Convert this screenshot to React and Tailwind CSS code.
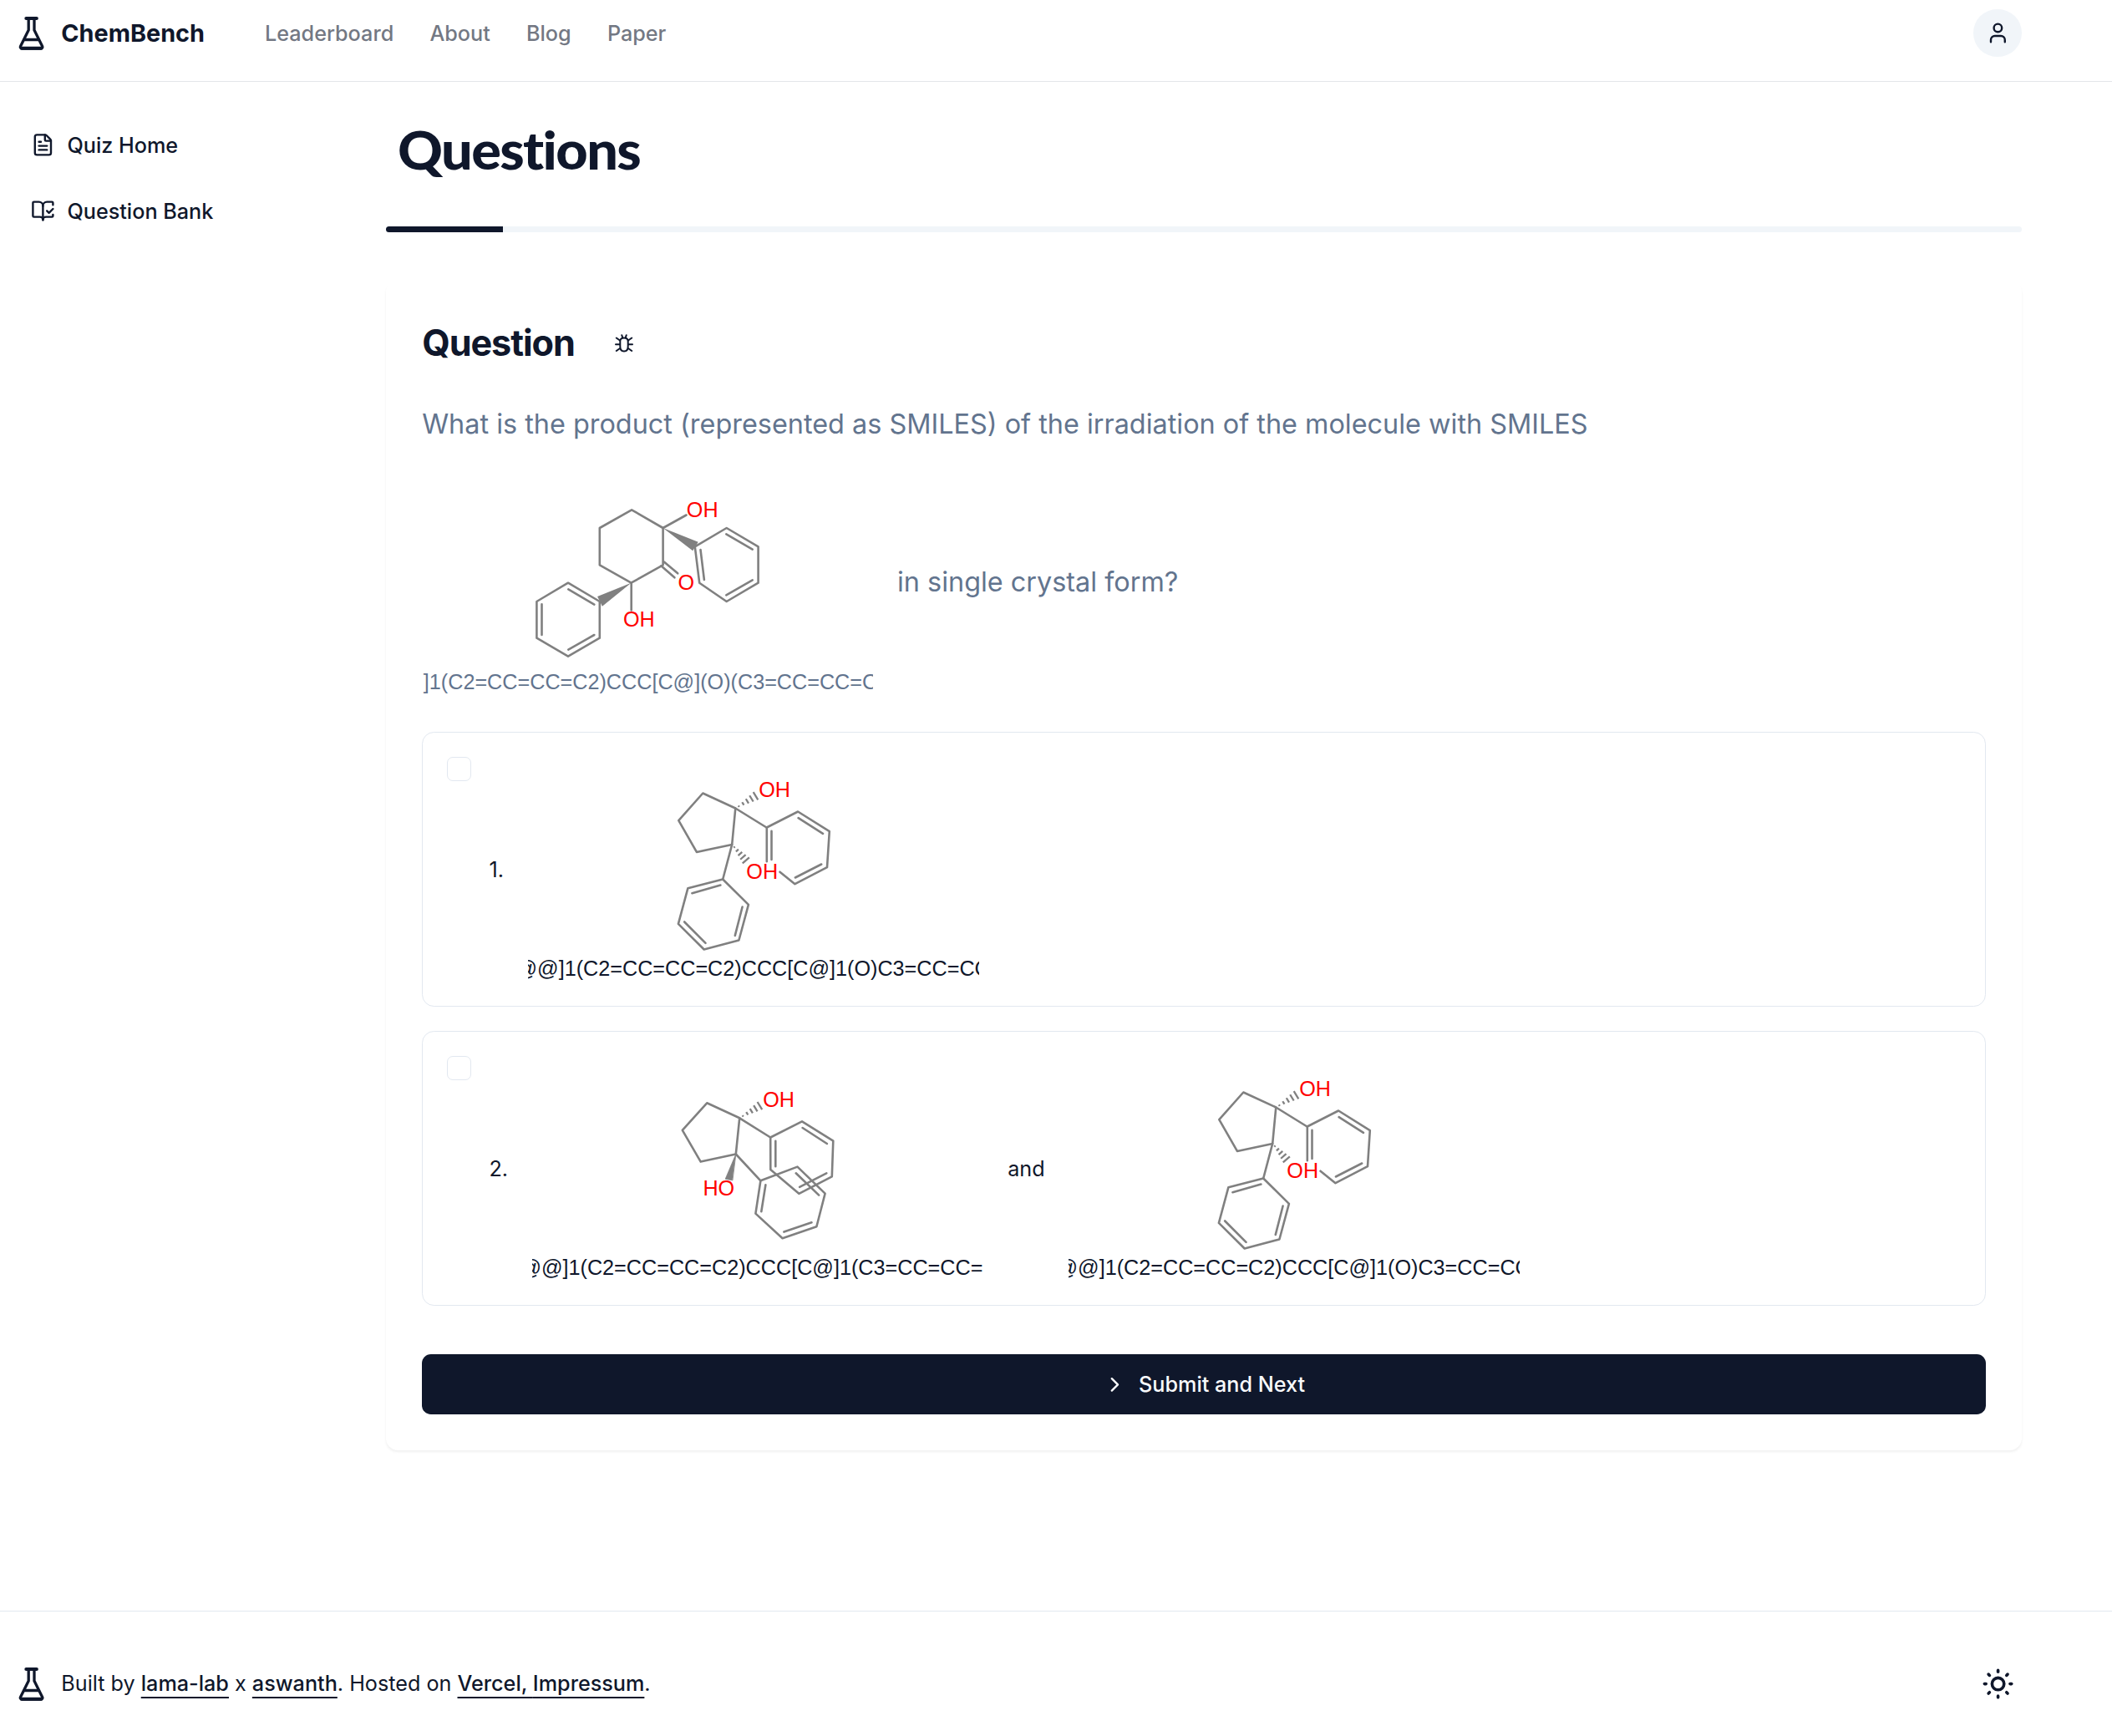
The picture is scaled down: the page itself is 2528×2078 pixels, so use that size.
import React from "react";
import { FileText, BookOpenCheck, User, ChevronRight, SunMedium } from "lucide-react";

const NAV = ["Leaderboard", "About", "Blog", "Paper"];

function Flask() {
  return (
    <svg width="32" height="42" viewBox="0 0 32 42" fill="none" stroke="currentColor" strokeLinecap="round" strokeLinejoin="round" className="shrink-0">
      <path d="M9.300 3h12.600" strokeWidth="4" />
      <path d="M12.200 3v14L2.500 36.500a1.800 1.800 0 0 0 1.600 2.600h23a1.800 1.800 0 0 0 1.600-2.600L19 17V3" strokeWidth="3.300" />
      <path d="M7.500 28.500h16.200" strokeWidth="3.400" />
      <path d="M3.800 38.800h23.600" strokeWidth="4" />
    </svg>
  );
}

function BugIcon() {
  return (
    <svg width="22" height="22" viewBox="0 0 22 22" fill="none" stroke="currentColor" strokeWidth="2" strokeLinecap="round" strokeLinejoin="round">
      <path d="M11 4.400c3.200 0 4.700 1.400 4.700 4v6.200c0 3.600-1.600 6-4.700 6s-4.700-2.400-4.700-6V8.400c0-2.600 1.500-4 4.700-4z" />
      <path d="M8.300 1.200l.8 2.600M13.700 1.200l-.8 2.600M1 12.300h5M16 12.300h5M1.800 4.500l4.200 3M20.200 4.500l-4.200 3M1.800 20l4.200-3M20.200 20l-4.200-3" />
    </svg>
  );
}

function Hash({ x1, y1, x2, y2, steps = [0.16, 0.36, 0.56, 0.76, 0.96], spread = 5.6 }) {
  const len = Math.hypot(x2 - x1, y2 - y1);
  const nx = -(y2 - y1) / len;
  const ny = (x2 - x1) / len;
  return steps.map((t) => {
    const cx = x1 + (x2 - x1) * t;
    const cy = y1 + (y2 - y1) * t;
    const h = spread * t;
    return (
      <path
        key={t}
        strokeWidth="2.3"
        strokeLinecap="butt"
        d={`M${cx - nx * h} ${cy - ny * h}L${cx + nx * h} ${cy + ny * h}`}
      />
    );
  });
}

function Molecule({ viewBox, smiles, textX, textY, labels, children }) {
  return (
    <svg width="540" height="280" viewBox={viewBox} className="shrink-0 overflow-hidden">
      <g fill="none" stroke="#808080" strokeWidth="2.6" strokeLinecap="round" strokeLinejoin="round">
        {children}
      </g>
      <g fontFamily="'Liberation Sans', Arial, sans-serif" fontSize="25.2">
        {labels.map(([t, x, y]) => (
          <text key={`${x}-${y}`} x={x} y={y} fill="#ff0000">
            {t}
          </text>
        ))}
        <text x={textX} y={textY} fill="currentColor">
          {smiles}
        </text>
      </g>
    </svg>
  );
}

function Ketone() {
  return (
    <Molecule
      viewBox="505.200 556 540 280"
      smiles="]1(C2=CC=CC=C2)CCC[C@](O)(C3=CC=CC=C3)C1=O"
      textX={507}
      textY={824.5}
      labels={[["OH", 822, 618.7], ["O", 811.700, 705.5], ["OH", 746.200, 749.7]]}
    >
      <path d="M756.300 610.300L793.800 632V676.300L755.700 697.700L718 676.300V632Z" />
      <path d="M793.800 632L821.700 616.500M755.900 697.700V730.500" />
      <path d="M793.800 632L835.900 648.700L829.400 659.300Z" fill="#808080" stroke="none" />
      <path d="M755.700 697.700L715.300 714L721.100 725.700Z" fill="#808080" stroke="none" />
      <path d="M832 654.300L869.900 632L907.800 654.300V697.700L869.900 720L837.400 697.700Z" />
      <path d="M869.500 639.300L900.900 657.700M900.900 694.300L869.500 712.300M838.700 658L843.100 694" />
      <path d="M795.300 672.700L811.400 686.300M791.500 677.300L807.600 691.300" />
      <path d="M718 720L680.200 697.700L642.600 720V763.700L680.200 785.700L718 763.700Z" />
      <path d="M680.500 705.300L711.500 723.700M648.700 723.300V760M680.500 777.700L711.500 760" />
    </Molecule>
  );
}

function CisDiol() {
  return (
    <Molecule
      viewBox="632 900.800 540 280"
      smiles="@@]1(C2=CC=CC=C2)CCC[C@]1(O)C3=CC=CC=C3"
      textX={617.5}
      textY={1167.8}
      labels={[["OH", 908.2, 954], ["OH", 893.300, 1051.600]]}
    >
      <path d="M841.300 949.300L880.300 967.300L876.200 1010.700L833.900 1019.700L812.300 982Z" />
      <Hash x1={880.3} y1={967.3} x2={905.5} y2={952} />
      <Hash x1={876.2} y1={1010.7} x2={893.5} y2={1030.500} />
      <path d="M880.300 967.300L917.500 990.300M876.200 1010.700L865.200 1052.300" />
      <path d="M917.800 1031V990.300L955.100 971.300L992.800 995L990 1038L951.500 1058L933.500 1043.500" />
      <path d="M955.600 979L985 997.700M983.200 1034.300L951.900 1050.300M923.500 994.700V1028.700" />
      <path d="M865.200 1052.300L823.400 1063L811.900 1105.700L842.700 1136.300L884.400 1125.300L895.900 1082.700Z" />
      <path d="M862.400 1059.300L828.400 1069M819.200 1103.300L844.500 1128.700M879.800 1119.700L888.600 1085.300" />
    </Molecule>
  );
}

function TransDiol() {
  return (
    <Molecule
      viewBox="637.200 1258.700 540 280"
      smiles="@@]1(C2=CC=CC=C2)CCC[C@]1(C3=CC=CC=C3)O"
      textX={622.6}
      textY={1525.700}
      labels={[["OH", 913.400, 1324.700], ["HO", 841.600, 1430.900]]}
    >
      <path d="M846.400 1320L885.400 1338L881 1381.200L838.900 1390.300L817 1352.600Z" />
      <Hash x1={885.4} y1={1338} x2={910.6} y2={1322.700} />
      <path d="M881 1381.200L868.400 1411L876.800 1412.500Z" fill="#808080" stroke="#808080" strokeWidth="0.8" />
      <path d="M885.400 1338L922.400 1361.200M881 1381.200L910.600 1413" />
      <path d="M922.400 1361.200L960.200 1342L997.500 1365.300L996 1408L956.500 1428.500L922.500 1399.700Z" />
      <path d="M960.800 1349.700L990.100 1368.700M989.500 1404L957.300 1420.500M928.500 1365.500V1396" />
      <path d="M910.600 1413L954.700 1396.300L987.800 1428.300L977.600 1468L936.800 1482L904.600 1452.300Z" />
      <path d="M952.900 1404L980.400 1430.300M971.700 1463L938.600 1474.300M916.600 1418L911.500 1450" />
    </Molecule>
  );
}

function Option({ number, children }) {
  return (
    <div className="flex h-[329px] rounded-[14.4px] border border-slate-200 pl-[29px] text-[25.2px]">
      <div className="mt-[29px] size-[28.8px] shrink-0 rounded-[7px] border border-slate-200" />
      <div className="ml-[21.4px] flex items-center pt-[2px]">
        <span className="mr-[29.4px]">{number}.</span>
        {children}
      </div>
    </div>
  );
}

function FooterLink({ children }) {
  return (
    <a className="font-medium underline decoration-[2px] underline-offset-[7px] [text-decoration-skip-ink:none]">{children}</a>
  );
}

export default function App() {
  return (
    <div className="flex h-[2078px] w-[2528px] flex-col overflow-hidden bg-white font-['Inter',sans-serif] text-slate-900">
      <header className="h-[98px] border-b border-[#e4e6ea]">
        <div className="flex h-[79px] items-center pl-[22px] pr-[108px]">
          <Flask />
          <span className="ml-[19.3px] text-[28.8px] font-bold leading-[36px]">ChemBench</span>
          <nav className="ml-[72px] flex gap-[43.2px] pt-px text-[25.2px] font-medium leading-[36px] text-[#737883]">
            {NAV.map((n) => (
              <a key={n}>{n}</a>
            ))}
          </nav>
          <div className="ml-auto flex size-[57.6px] items-center justify-center rounded-full bg-slate-100">
            <User size={28.8} />
          </div>
        </div>
      </header>

      <div className="flex h-[1830px]">
        <aside className="flex w-[462px] flex-col gap-[14.4px] pl-[15.6px] pt-[43px] text-[25.2px] font-medium">
          <a className="flex h-[64.8px] items-center gap-[14.4px] px-[21.6px]">
            <FileText size={28.8} />
            <span className="pt-[2px]">Quiz Home</span>
          </a>
          <a className="flex h-[64.8px] items-center gap-[14.4px] px-[21.6px]">
            <BookOpenCheck size={28.8} />
            <span className="pt-[2px]">Question Bank</span>
          </a>
        </aside>

        <main className="w-[1958px]">
          <h1 className="ml-[14px] mt-[48.6px] origin-left scale-x-[1.065] font-['Lato',sans-serif] text-[62.5px] font-black leading-[64.8px] tracking-[-1.5px]">
            Questions
          </h1>
          <div className="mt-[59.6px] h-[7px] overflow-hidden rounded-full bg-slate-100">
            <div className="h-full w-[139.8px] bg-slate-900" />
          </div>

          <section className="mt-[57px] h-[1401px] rounded-[14.4px] px-[43.2px] pt-[54.4px] shadow-[0_2.4px_3px_-0.6px_rgba(0,0,0,0.06)]">
            <div className="flex h-[43.2px] items-center">
              <h2 className="text-[43.2px] font-bold leading-[43.2px] tracking-[-1.08px]">Question</h2>
              <span className="ml-[48.500px]">
                <BugIcon />
              </span>
            </div>
            <p className="mt-[52px] text-[32.4px] leading-[45px] text-slate-500">
              What is the product (represented as SMILES) of the irradiation of the molecule with SMILES
            </p>
            <div className="mt-[26.4px] flex h-[280px] items-center text-[32.4px] text-slate-500">
              <Ketone />
              <span className="ml-[28.8px] pt-[2px]">in single crystal form?</span>
            </div>

            <div className="mt-[40px] flex flex-col gap-[29px]">
              <Option number={1}>
                <CisDiol />
              </Option>
              <Option number={2}>
                <TransDiol />
                <span className="mx-[28.8px]">and</span>
                <CisDiol />
              </Option>
            </div>

            <button className="mt-[58px] flex h-[72px] w-full items-center justify-center gap-[14.4px] rounded-[10.8px] bg-slate-900 text-[25.2px] font-medium text-slate-50">
              <ChevronRight size={28.8} />
              <span className="pt-[2px]">Submit and Next</span>
            </button>
          </section>
        </main>
      </div>

      <footer className="h-[150px] border-t border-slate-200 pt-[65px]">
        <div className="flex h-[43.2px] items-center pl-[22px] pr-[115px]">
          <Flask />
          <p className="ml-[19.3px] text-[25.2px]">
            Built by <FooterLink>lama-lab</FooterLink> x <FooterLink>aswanth</FooterLink>. Hosted on{" "}
            <FooterLink>Vercel, </FooterLink>
            <FooterLink>Impressum</FooterLink>.
          </p>
          <SunMedium size={43.2} className="ml-auto" />
        </div>
      </footer>
    </div>
  );
}
